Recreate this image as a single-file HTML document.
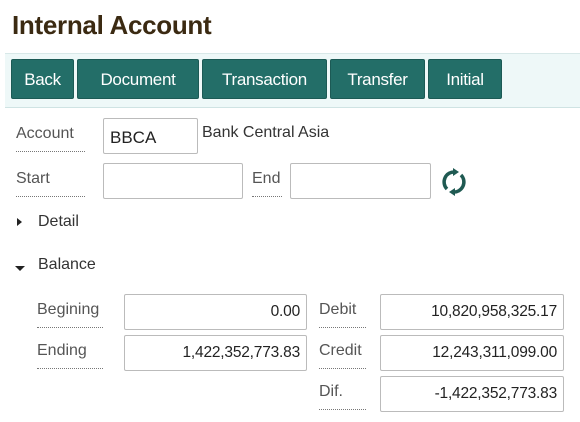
<!DOCTYPE html>
<html><head><style>
body{margin:0;width:580px;height:422px;background:#fff;font-family:"Liberation Sans",sans-serif;position:relative;overflow:hidden}
.a{position:absolute}
h1{position:absolute;left:12px;top:10px;margin:0;font-size:26px;font-weight:bold;color:#3b2a12;letter-spacing:-0.3px}
.bar{position:absolute;left:5px;top:53px;width:580px;height:53px;background:#eef8f8;border-top:1px solid #d8e8e8;border-bottom:1px solid #cfe3e3}
.btn{position:absolute;top:59px;height:40px;background:#236e68;border:1px solid #1c5a55;border-radius:2px;color:#fff;font-size:17px;line-height:39px;text-align:center;box-sizing:border-box;letter-spacing:-0.3px}
.lbl{position:absolute;font-size:16px;color:#555;border-bottom:1px dotted #777;padding-bottom:4px}
.in{position:absolute;border:1px solid #bbb;border-radius:2px;box-sizing:border-box;font-size:15.5px;color:#222;background:#fff}
.num{text-align:right;padding-right:6px;line-height:34px;letter-spacing:-0.2px}
.t{position:absolute;font-size:16px;color:#333}
</style></head><body>
<h1>Internal Account</h1>
<div class="bar"></div>
<div class="btn" style="left:11px;width:63px">Back</div>
<div class="btn" style="left:77px;width:122px">Document</div>
<div class="btn" style="left:202px;width:125px">Transaction</div>
<div class="btn" style="left:330px;width:95px">Transfer</div>
<div class="btn" style="left:428px;width:74px">Initial</div>

<div class="lbl" style="left:16px;top:125px;width:69px;height:22px">Account</div>
<div class="in" style="left:103px;top:118px;width:95px;height:36px;padding:9px 0 0 6px;font-size:17px">BBCA</div>
<div class="t" style="left:202px;top:124px;color:#333">Bank Central Asia</div>
<div class="lbl" style="left:16px;top:170px;width:69px;height:22px">Start</div>
<div class="in" style="left:103px;top:163px;width:140px;height:36px"></div>
<div class="lbl" style="left:252px;top:170px;width:30px;height:22px">End</div>
<div class="in" style="left:290px;top:163px;width:141px;height:36px"></div>
<svg class="a" style="left:439px;top:167px" width="30" height="30" viewBox="0 0 30 30">
<path d="M8 22 A10 10 0 0 1 16 5" fill="none" stroke="#1f5a52" stroke-width="3.5"/>
<path d="M14 1 L20 5 L14 9 Z" fill="#1f5a52"/>
<path d="M22 8 A10 10 0 0 1 14 25" fill="none" stroke="#1f5a52" stroke-width="3.5"/>
<path d="M16 21 L10 25 L16 29 Z" fill="#1f5a52"/>
</svg>

<svg class="a" style="left:16px;top:217px" width="8" height="10"><path d="M1 1 L6 5 L1 9Z" fill="#222"/></svg>
<div class="t" style="left:38px;top:213px">Detail</div>
<svg class="a" style="left:14px;top:265px" width="12" height="8"><path d="M1 1 L11 1 L6 6Z" fill="#222"/></svg>
<div class="t" style="left:38px;top:256px">Balance</div>

<div class="lbl" style="left:37px;top:301px;width:66px;height:22px">Begining</div>
<div class="in num" style="left:124px;top:294px;width:183px;height:36px">0.00</div>
<div class="lbl" style="left:37px;top:342px;width:66px;height:22px">Ending</div>
<div class="in num" style="left:124px;top:335px;width:183px;height:36px">1,422,352,773.83</div>
<div class="lbl" style="left:319px;top:301px;width:47px;height:22px">Debit</div>
<div class="in num" style="left:380px;top:294px;width:184px;height:36px">10,820,958,325.17</div>
<div class="lbl" style="left:319px;top:342px;width:47px;height:22px">Credit</div>
<div class="in num" style="left:380px;top:335px;width:184px;height:36px">12,243,311,099.00</div>
<div class="lbl" style="left:319px;top:383px;width:47px;height:22px">Dif.</div>
<div class="in num" style="left:380px;top:376px;width:184px;height:36px">-1,422,352,773.83</div>
</body></html>
